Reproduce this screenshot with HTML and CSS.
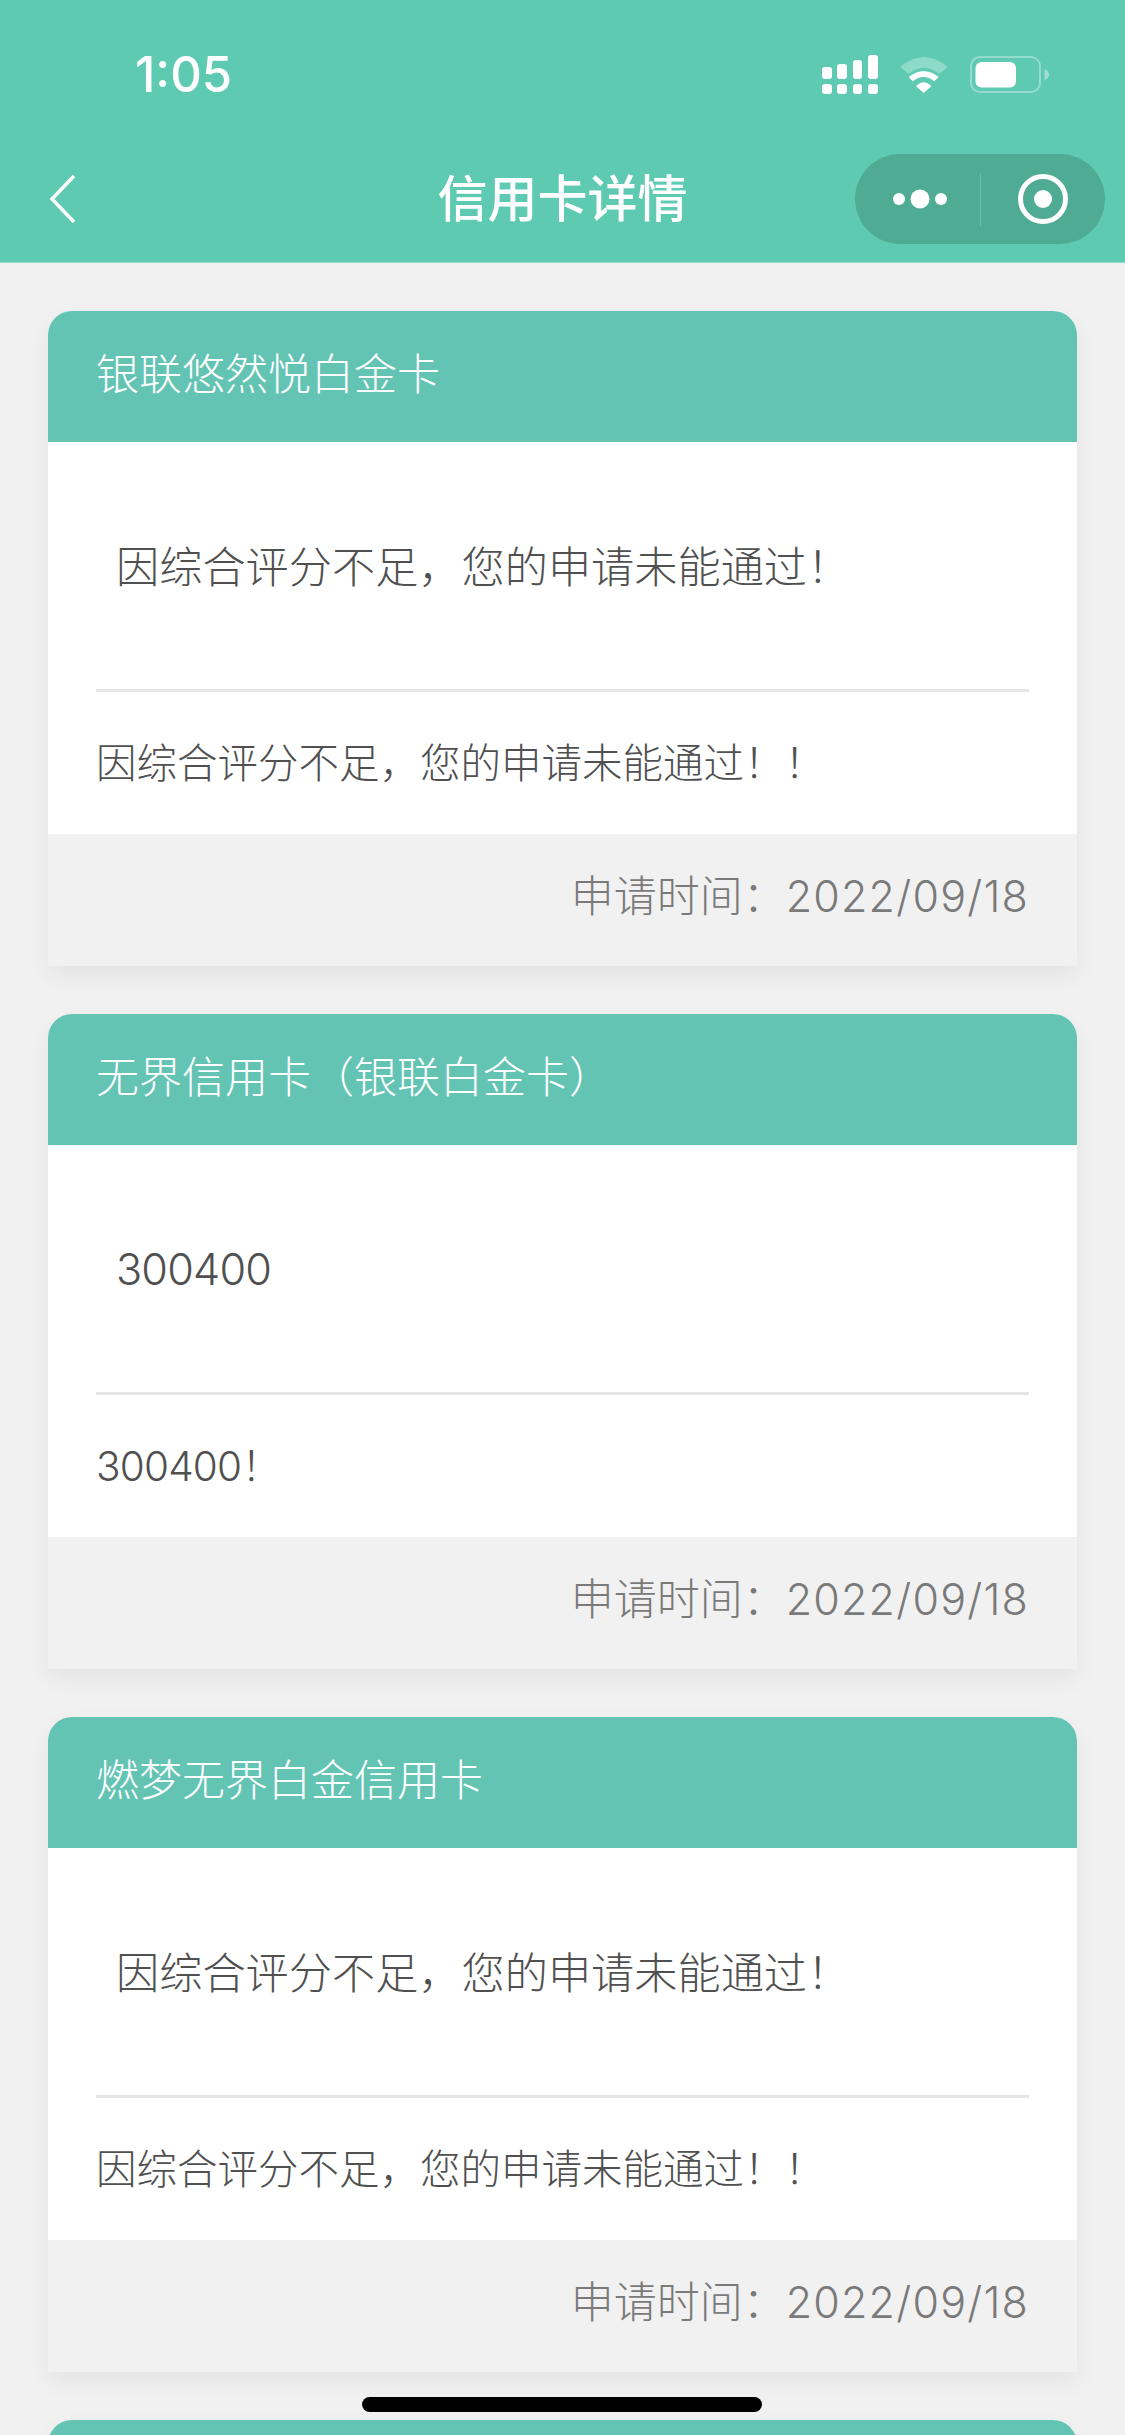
FILE: index.html
```html
<!DOCTYPE html>
<html lang="zh-CN">
  <head>
    <meta charset="utf-8" />
    <meta name="viewport" content="width=device-width, initial-scale=1" />
    <title>信用卡详情</title>
    <link rel="stylesheet" href="styles.css">
  </head>
  <body>
    <div class="page">
      <header class="top">
        <div class="status">
          <span class="time">1:05</span>
          <div class="status-icons">
            <!-- signal -->
            <svg class="signal" width="56" height="39" viewBox="0 0 56 39" fill="#fff">
              <rect x="0" y="12" width="10" height="12" rx="3" />
              <rect x="15" y="9" width="10" height="15" rx="3" />
              <rect x="31" y="5" width="9" height="19" rx="3" />
              <rect x="46" y="0" width="10" height="24" rx="3" />
              <rect x="0" y="29" width="10" height="10" rx="3" />
              <rect x="15" y="29" width="10" height="10" rx="3" />
              <rect x="31" y="29" width="9" height="10" rx="3" />
              <rect x="46" y="29" width="10" height="10" rx="3" />
            </svg>
            <!-- wifi -->
            <svg class="wifi" width="48" height="36" viewBox="0 0 144 108">
              <path d="M0 30 Q71 -30 143 30 L118 50 Q71 14 26 50 Z" fill="#fff" fill-opacity=".3" />
              <path d="M26 60 Q71 24 116 60 L103 73 Q71 47 38 73 Z" fill="#fff" />
              <path d="M48 88 Q71 64 94 88 L71 108 Z" fill="#fff" />
            </svg>
            <!-- battery -->
            <svg class="battery" width="79" height="37" viewBox="0 0 79 37">
              <rect x="1" y="1" width="69" height="35" rx="9" fill="none" stroke="#fff" stroke-opacity=".35" stroke-width="2" />
              <rect x="5.5" y="6" width="40.5" height="25.5" rx="6" fill="#fff" />
              <path d="M74.5 13 Q79 15 79 18.500 Q79 22 74.500 24 Z" fill="#fff" fill-opacity=".4" />
            </svg>
          </div>
        </div>
        <nav class="nav">
          <svg class="back" width="27" height="50" viewBox="0 0 27 50">
            <path d="M25 2 L3 25 L25 48" fill="none" stroke="#fff" stroke-width="3.500" />
          </svg>
          <h1 class="nav-title">信用卡详情</h1>
          <div class="capsule">
            <div class="capsule-part">
              <svg class="capsule-dots" width="60" height="20" viewBox="0 0 60 20" fill="#fff">
                <circle cx="6" cy="10" r="6" />
                <circle cx="27" cy="10" r="9.500" />
                <circle cx="48" cy="10" r="6" />
              </svg>
            </div>
            <span class="capsule-line"></span>
            <div class="capsule-part">
              <svg width="50" height="50" viewBox="0 0 50 50">
                <circle cx="25" cy="25" r="22.500" fill="none" stroke="#fff" stroke-width="5" />
                <circle cx="25" cy="25" r="9" fill="#fff" />
              </svg>
            </div>
          </div>
        </nav>
      </header>

      <main class="list">
        <section class="card">
          <div class="card-head">银联悠然悦白金卡</div>
          <div class="card-main">因综合评分不足，您的申请未能通过！</div>
          <div class="card-note">因综合评分不足，您的申请未能通过！！</div>
          <div class="card-foot"><span>申请时间：<span class="date">2022/09/18</span></span></div>
        </section>
        <section class="card">
          <div class="card-head">无界信用卡（银联白金卡）</div>
          <div class="card-main card-main-code"><span class="code">300400</span></div>
          <div class="card-note"><span><span class="code">300400</span>！</span></div>
          <div class="card-foot"><span>申请时间：<span class="date">2022/09/18</span></span></div>
        </section>
        <section class="card">
          <div class="card-head">燃梦无界白金信用卡</div>
          <div class="card-main">因综合评分不足，您的申请未能通过！</div>
          <div class="card-note">因综合评分不足，您的申请未能通过！！</div>
          <div class="card-foot"><span>申请时间：<span class="date">2022/09/18</span></span></div>
        </section>
        <section class="card">
          <div class="card-head"></div>
        </section>
      </main>

      <div class="home-bar"></div>
    </div>
  </body>
</html>
```

FILE: styles.css
```css
html, body {
  margin: 0;
  padding: 0;
}

body {
  font-family: Inter, "Noto Sans CJK SC", sans-serif;
  background-color: #f1f1f1;
}

.page {
  position: relative;
  width: 1125px;
  height: 2435px;
  overflow: hidden;
  background-color: #f1f1f1;
}

/* top bar */
.top {
  height: 263px;
  background-color: #5ecab1;
  color: #fff;
  box-sizing: border-box;
  border-bottom: 1px solid #8ed9c8;
}

.status {
  height: 154px;
  display: flex;
  justify-content: space-between;
  align-items: flex-start;
  padding: 55px 76px 0 135px;
  box-sizing: border-box;
}

.time {
  font-size: 49px;
  line-height: 40px;
  font-weight: 500;
}

.status-icons {
  display: flex;
  align-items: flex-start;
  gap: 22px;
}

.wifi {
  margin-top: 2px;
}

.battery {
  margin-top: 1px;
}

.nav {
  position: relative;
  height: 90px;
  display: flex;
  align-items: center;
  justify-content: space-between;
  padding: 0 20px 0 49px;
}

.nav-title {
  position: absolute;
  left: 0;
  right: 0;
  margin: 0;
  text-align: center;
  font-size: 50px;
  font-weight: 500;
  line-height: 90px;
}

.capsule {
  position: relative;
  width: 250px;
  height: 90px;
  display: flex;
  align-items: center;
  border-radius: 45px;
  background-color: #50ab95;
}

.capsule-part {
  flex: 1;
  display: flex;
  justify-content: center;
  align-items: center;
}

.capsule-dots {
  margin-left: 12px;
}

.capsule-line {
  width: 1px;
  height: 53px;
  background-color: #6dbba8;
}

/* cards */
.list {
  display: flex;
  flex-direction: column;
  gap: 48px;
  padding: 48px 48px 0;
}

.card {
  flex-shrink: 0;
  border-radius: 24px 24px 0 0;
  background-color: #fff;
  box-shadow: 0 10px 24px rgba(0, 0, 0, 0.06);
}

.card-head {
  height: 131px;
  padding: 0 48px 11px;
  box-sizing: border-box;
  display: flex;
  align-items: center;
  border-radius: 24px 24px 0 0;
  background-color: #64c4b4;
  color: #fff;
  font-size: 43px;
  font-weight: 300;
}

.card-main {
  height: 250px;
  margin: 0 48px;
  padding: 0 20px 4px;
  box-sizing: border-box;
  display: flex;
  align-items: center;
  border-bottom: 3px solid #e6e6e6;
  color: #505050;
  font-size: 43.2px;
  font-weight: 300;
}

.card-main-code {
  padding-bottom: 0;
}

.card-note {
  height: 142px;
  padding: 0 48px 6px;
  box-sizing: border-box;
  display: flex;
  align-items: center;
  color: #505050;
  font-size: 40.5px;
  font-weight: 300;
}

.card-foot {
  height: 132px;
  padding: 0 48px 14px;
  box-sizing: border-box;
  display: flex;
  align-items: center;
  justify-content: flex-end;
  background-color: #f1f1f1;
  color: #7a7a7a;
  font-size: 43px;
  font-weight: 300;
}

.date {
  letter-spacing: 1.2px;
}

.code {
  letter-spacing: -0.8px;
}

.home-bar {
  position: absolute;
  left: 362px;
  top: 2397px;
  width: 400px;
  height: 15px;
  border-radius: 8px;
  background-color: #000;
}
```
